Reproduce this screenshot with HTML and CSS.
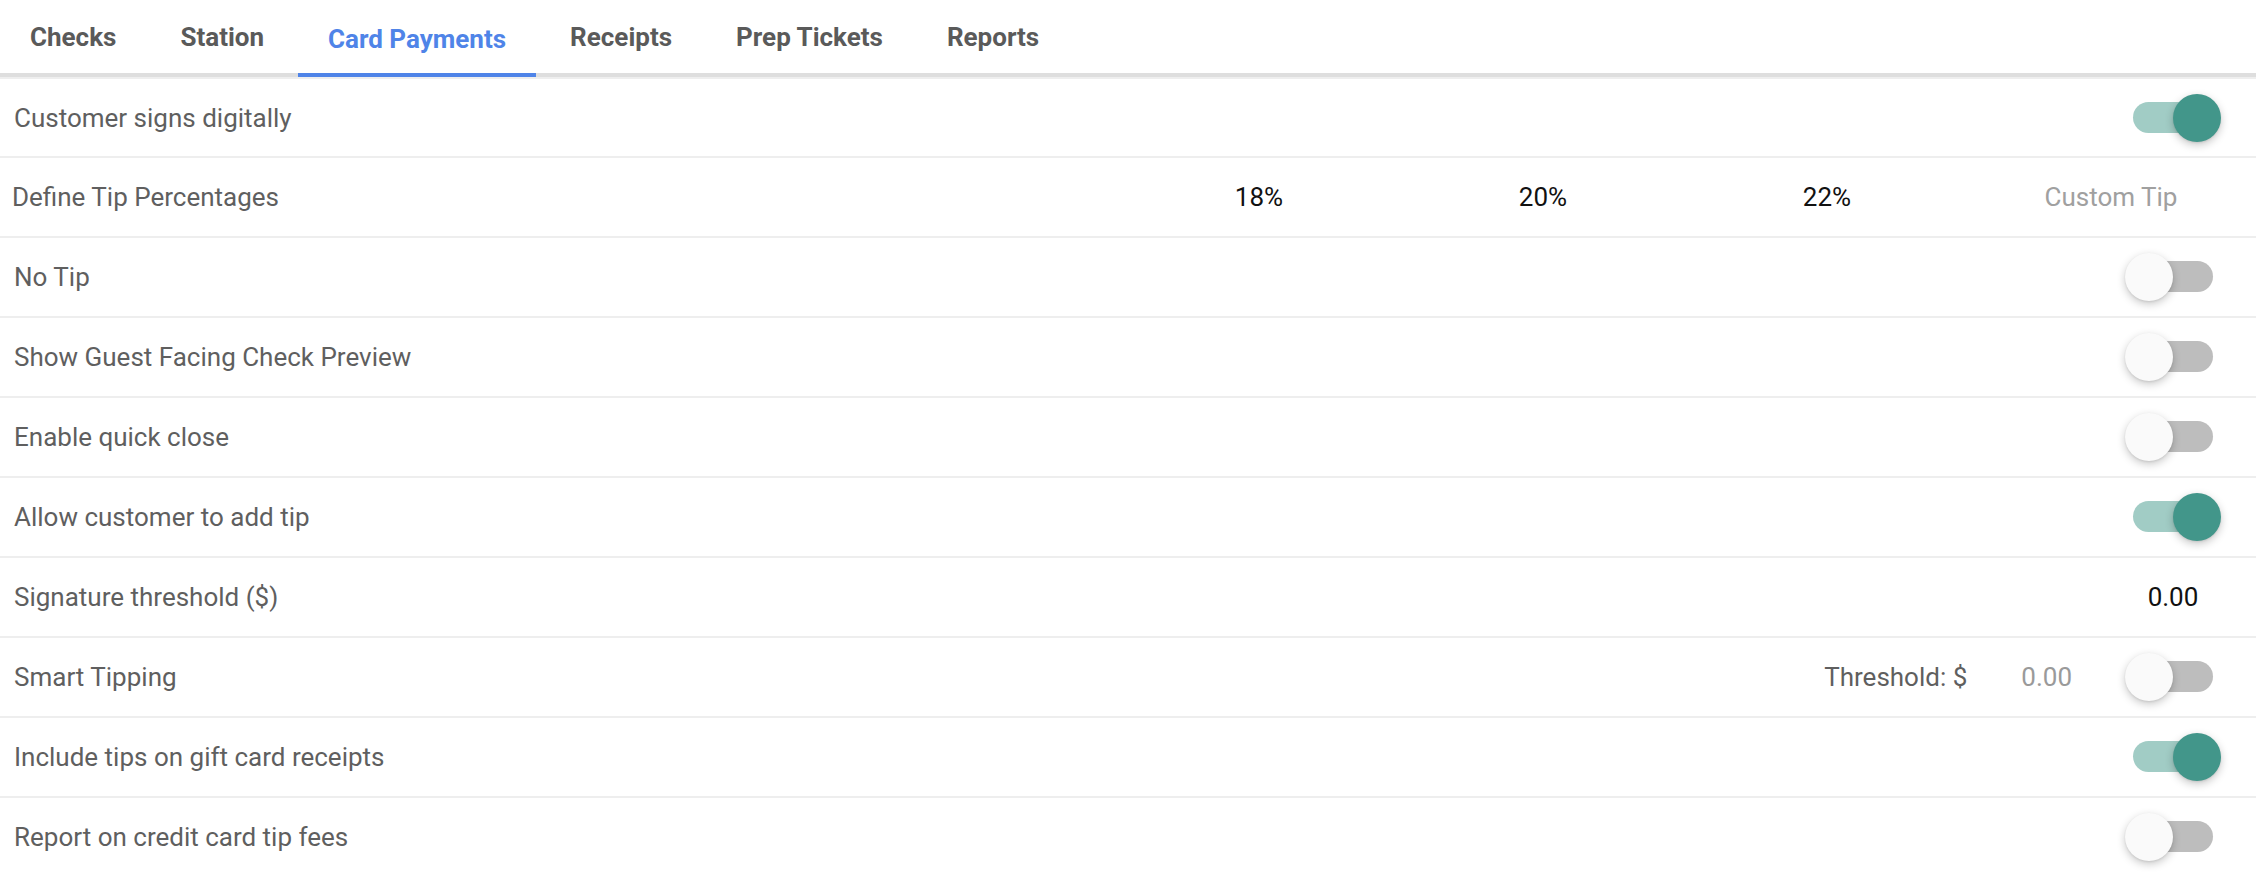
FILE: index.html
```html
<!DOCTYPE html>
<html lang="en">

<head>
    <meta charset="UTF-8">
    <meta name="viewport" content="width=device-width, initial-scale=1.0">
    <title>Card Payments</title>
    <link rel="stylesheet" href="styles.css">
</head>

<body>
    <nav class="tabs">
        <a class="tab">Checks</a>
        <a class="tab">Station</a>
        <a class="tab active">Card Payments</a>
        <a class="tab">Receipts</a>
        <a class="tab">Prep Tickets</a>
        <a class="tab">Reports</a>
    </nav>

    <div class="settings">
        <div class="row">
            <span class="label">Customer signs digitally</span>
            <span class="toggle on"></span>
        </div>
        <div class="row tip-row">
            <span class="label">Define Tip Percentages</span>
            <div class="tips">
                <span>18%</span>
                <span>20%</span>
                <span>22%</span>
                <span class="muted">Custom Tip</span>
            </div>
        </div>
        <div class="row">
            <span class="label">No Tip</span>
            <span class="toggle"></span>
        </div>
        <div class="row">
            <span class="label">Show Guest Facing Check Preview</span>
            <span class="toggle"></span>
        </div>
        <div class="row">
            <span class="label">Enable quick close</span>
            <span class="toggle"></span>
        </div>
        <div class="row">
            <span class="label">Allow customer to add tip</span>
            <span class="toggle on"></span>
        </div>
        <div class="row">
            <span class="label">Signature threshold ($)</span>
            <span class="value">0.00</span>
        </div>
        <div class="row">
            <span class="label">Smart Tipping</span>
            <div class="threshold">
                <span>Threshold: $</span>
                <span class="muted">0.00</span>
            </div>
            <span class="toggle"></span>
        </div>
        <div class="row">
            <span class="label">Include tips on gift card receipts</span>
            <span class="toggle on"></span>
        </div>
        <div class="row">
            <span class="label">Report on credit card tip fees</span>
            <span class="toggle"></span>
        </div>
    </div>
</body>

</html>
```

FILE: styles.css
```css
/* styles.css */

body {
    font-family: Roboto, "Noto Sans", sans-serif;
    background-color: #fff;
    color: #5f5f5f;
    margin: 0;
    overflow: hidden;
}

.tabs {
    display: flex;
    gap: 4px;
    height: 73px;
    border-bottom: 4px solid #dedede;
}

.tab {
    display: flex;
    align-items: center;
    padding: 0 30px;
    font-size: 26px;
    font-weight: 700;
    color: #5a5a5a;
    cursor: pointer;
}

.tab.active {
    color: #4f84e8;
    border-bottom: 4px solid #4f84e8;
    margin-bottom: -4px;
    padding-top: 4px;
}

.settings {
    border-top: 2px solid #eeeeee;
}

.row {
    display: flex;
    align-items: center;
    height: 78px;
    padding: 0 35px 0 14px;
    border-bottom: 2px solid #eeeeee;
    font-size: 26px;
}

.row:first-child {
    height: 77px;
}

.label {
    flex: 1;
}

.tip-row {
    padding: 0 3px 0 12px;
}

.tips {
    display: grid;
    grid-template-columns: repeat(4, 284px);
    text-align: center;
    color: #111;
}

.muted {
    color: #9a9a9a;
}

.tips .muted {
    color: #a0a0a0;
}

.value {
    width: 96px;
    text-align: center;
    color: #111;
}

.threshold {
    display: flex;
    gap: 54px;
    margin-right: 53px;
}

.toggle {
    position: relative;
    width: 96px;
    height: 48px;
}

.toggle::before {
    content: "";
    position: absolute;
    left: 8px;
    right: 8px;
    top: 8px;
    height: 31px;
    border-radius: 16px;
    background-color: #bdbdbd;
}

.toggle::after {
    content: "";
    position: absolute;
    left: 0;
    top: 0;
    width: 48px;
    height: 48px;
    border-radius: 50%;
    background-color: #fafafa;
    box-shadow: 0 3px 8px rgba(0, 0, 0, 0.22), 0 1px 2px rgba(0, 0, 0, 0.08);
}

.toggle.on::before {
    background-color: #a1ccc5;
}

.toggle.on::after {
    left: 48px;
    background-color: #42968a;
}
```
